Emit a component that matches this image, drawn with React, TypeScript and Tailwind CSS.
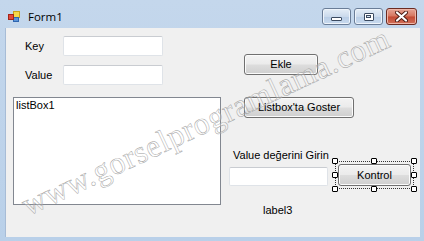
import React from "react";

function TextBox({ w, h }: { w: string; h: string }) {
  return (
    <div
      className={`${w} ${h} rounded-[2px] border border-[#dfe3e8] border-t-[#c9ccd1] bg-white`}
    />
  );
}

function Btn({ label, cls }: { label: string; cls: string }) {
  return (
    <div
      className={`${cls} flex items-center justify-center rounded-[3px] border border-[#707070] bg-[linear-gradient(#f3f3f3_0%,#ebebeb_48%,#dddddd_52%,#cfcfcf_100%)] shadow-[inset_0_0_0_1px_#fbfbfb] leading-none`}
    >
      {label}
    </div>
  );
}

function Handle({ cls }: { cls: string }) {
  return <div className={`absolute h-[6px] w-[6px] rounded-[1px] border border-black bg-white ${cls}`} />;
}

export default function App() {
  return (
    <div className="relative h-[241px] w-[424px] overflow-hidden bg-[linear-gradient(#c4d7ec,#b9d0e9)] font-['Liberation_Sans',Arial,sans-serif] text-[11px] text-black">
      {/* title bar */}
      <div className="flex h-[28px] items-start">
        <svg className="ml-[8px] mt-[11px]" width="12" height="11" viewBox="0 0 12 11">
          <rect x="5.5" y="0.5" width="6" height="6" fill="#f5d84a" stroke="#c9a21a" />
          <rect x="5.5" y="6.5" width="5" height="4" fill="#5b94d8" stroke="#2f66b0" />
          <rect x="0.5" y="3.5" width="5" height="5" fill="#e2483a" stroke="#a52418" />
        </svg>
        <span className="ml-[8px] mt-[9px] font-['Open_Sans',sans-serif] text-[11.5px] leading-[16px] text-black">
          Form1
        </span>
        <div className="ml-auto mr-[7px] mt-[8px] flex gap-[3px]">
          <div className="flex h-[17px] w-[29px] items-end justify-center rounded-[3px] border border-[#6a7d97] bg-[linear-gradient(#e4edf7,#cbdaec_50%,#b8cde6_51%,#c9daee)] pb-[3px] shadow-[inset_0_0_0_1px_#eef4fb]">
            <div className="h-[4px] w-[11px] rounded-[1px] border border-[#3b4a60] bg-white" />
          </div>
          <div className="flex h-[17px] w-[29px] items-center justify-center rounded-[3px] border border-[#6a7d97] bg-[linear-gradient(#e4edf7,#cbdaec_50%,#b8cde6_51%,#c9daee)] shadow-[inset_0_0_0_1px_#eef4fb]">
            <div className="flex h-[8px] w-[10px] items-center justify-center rounded-[1px] border border-[#3b4a60] bg-white">
              <div className="h-[3px] w-[5px] border border-[#3b4a60] bg-[#d7e3f1]" />
            </div>
          </div>
          <div className="flex h-[17px] w-[31px] items-center justify-center rounded-[3px] border border-[#6b2b22] bg-[linear-gradient(#e6a596,#d6765f_48%,#c34a33_52%,#d0705a)] shadow-[inset_0_0_0_1px_#eeb6a8]">
            <svg width="13" height="11" viewBox="0 0 13 11">
              <path d="M2 1.5 L11 9.5 M11 1.5 L2 9.5" stroke="#4a1a12" strokeWidth="4" strokeLinecap="round" />
              <path d="M2 1.5 L11 9.5 M11 1.5 L2 9.5" stroke="#ffffff" strokeWidth="2.2" strokeLinecap="round" />
            </svg>
          </div>
        </div>
      </div>

      {/* client area */}
      <div className="ml-[5px] mr-[4px] flex h-[209px] border-l border-[#a7bcd6] bg-[#f0f0f0] pl-[7px] pt-[8px]">
        {/* left column */}
        <div className="flex w-[208px] flex-col">
          <div className="flex h-[20px] items-center">
            <span className="w-[50px] pl-[12px] leading-[13px]">Key</span>
            <TextBox w="w-[100px]" h="h-[20px]" />
          </div>
          <div className="mt-[9px] flex h-[20px] items-center">
            <span className="w-[50px] pl-[12px] leading-[13px]">Value</span>
            <TextBox w="w-[100px]" h="h-[20px]" />
          </div>
          <div className="mt-[12px] h-[108px] w-[208px] border border-[#828790] bg-white pl-[2px] pt-[1px] leading-[13px]">
            listBox1
          </div>
        </div>

        {/* right column */}
        <div className="ml-[8px] flex flex-col">
          <Btn label="Ekle" cls="ml-[15px] mt-[18px] h-[21px] w-[74px]" />
          <Btn label="Listbox'ta Goster" cls="ml-[15px] mt-[22px] h-[21px] w-[110px]" />
          <span className="mt-[30px] pl-[4px] leading-[14px]">Value değerini Girin</span>
          <div className="mt-[2px] flex items-end">
            <TextBox w="w-[99px]" h="h-[19px]" />
            <div className="relative ml-[10px]">
              <Btn label="Kontrol" cls="h-[22px] w-[73px]" />
              <div className="absolute inset-[-3px] border border-dotted border-[#333]" />
              <Handle cls="left-[-6px] top-[-6px]" />
              <Handle cls="left-[33px] top-[-6px]" />
              <Handle cls="right-[-6px] top-[-6px]" />
              <Handle cls="left-[-6px] top-[8px]" />
              <Handle cls="right-[-6px] top-[8px]" />
              <Handle cls="bottom-[-6px] left-[-6px]" />
              <Handle cls="bottom-[-6px] left-[33px]" />
              <Handle cls="bottom-[-6px] right-[-6px]" />
            </div>
          </div>
          <span className="ml-[34px] mt-[17px] leading-[14px]">label3</span>
        </div>
      </div>

      {/* watermark */}
      <span className="pointer-events-none absolute left-[28px] top-[187px] origin-[0_29px] -rotate-[25deg] whitespace-nowrap font-['Liberation_Serif',serif] text-[32px] leading-[36px] tracking-[0.6px] text-[rgba(255,255,255,0.25)] [-webkit-text-stroke:0.45px_#9a9a9a]">
        www.gorselprogramlama.com
      </span>
    </div>
  );
}
